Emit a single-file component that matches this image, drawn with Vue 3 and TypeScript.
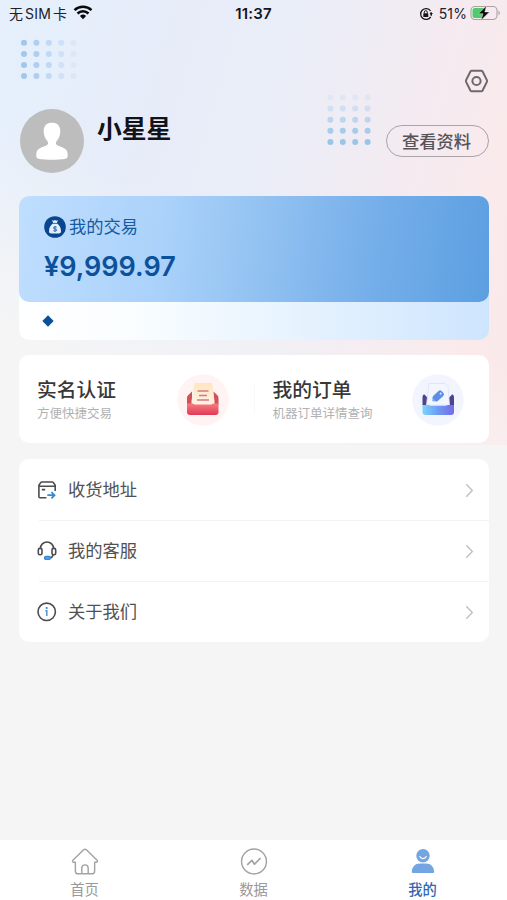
<script setup lang="ts">
interface Dot { x: number; y: number; o: number }
interface MenuItem { id: string; label: string }

const topDots: Dot[] = []
for (let r = 0; r < 4; r++) {
  for (let c = 0; c < 5; c++) {
    topDots.push({ x: 4 + c * 12.4, y: 3.8 + r * 11.1, o: [0.9, 0.72, 0.48, 0.28, 0.14][c] })
  }
}

const sideDots: Dot[] = []
for (let r = 0; r < 5; r++) {
  for (let c = 0; c < 4; c++) {
    sideDots.push({ x: 4.4 + c * 12.4, y: 4.5 + r * 11.1, o: [0.14, 0.32, 0.55, 0.8, 0.95][r] })
  }
}

const menu: MenuItem[] = [
  { id: 'address', label: '收货地址' },
  { id: 'service', label: '我的客服' },
  { id: 'about', label: '关于我们' },
]
</script>

<template>
  <main class="page">
    <div class="status">
      <div class="carrier">
        <span>无<i class="sim">SIM</i>卡</span>
        <svg width="20" height="15" viewBox="0 0 20 15">
          <path d="M10 14.2 6.9 11a4.5 4.5 0 0 1 6.2 0Z" fill="#08090c" />
          <path d="M4.5 8.5a8 8 0 0 1 11 0M1.5 5.2a12.4 12.4 0 0 1 17 0" fill="none" stroke="#08090c" stroke-width="2.5" />
        </svg>
      </div>
      <div class="clock">11:37</div>
      <div class="power">
        <svg width="14" height="14" viewBox="0 0 14 14">
          <path d="M11.5 3.9A5.4 5.4 0 1 0 11.7 9.8M12 5.1a5.4 5.4 0 0 1 0 3.7" fill="none" stroke="#181519" stroke-width="1.3" />
          <path d="m10.6 6 3.2.1-1.4 2.4z" fill="#181519" />
          <rect x="4.3" y="6.3" width="5" height="3.8" rx=".6" fill="#181519" />
          <path d="M5.3 6.5V5.2a1.5 1.5 0 0 1 3 0v1.3" fill="none" stroke="#181519" stroke-width="1" />
        </svg>
        <span>51%</span>
        <svg class="battery" width="31" height="16" viewBox="0 0 31 16">
          <rect x="1" y="1.5" width="26" height="13" rx="4" fill="none" stroke="#a9a2a5" stroke-width="1.1" />
          <path d="M28.5 5.7v4.6c1.7-.7 1.7-3.9 0-4.6Z" fill="#a9a2a5" />
          <path d="M5 3h9v10H5a2.5 2.5 0 0 1-2.5-2.5v-5A2.5 2.5 0 0 1 5 3Z" fill="#50cb6c" />
          <path d="M16.6 .8 8.4 8.8h4.6L10.8 15.4l8.7-8.5h-4.7Z" fill="#09090a" stroke="#f6edf2" stroke-width=".5" />
        </svg>
      </div>
    </div>

    <header class="profile">
      <svg class="dots-top" width="58" height="42" viewBox="0 0 58 42">
        <circle v-for="(d, i) in topDots" :key="i" :cx="d.x" :cy="d.y" r="3" fill="#9bc1e9" :opacity="d.o" />
      </svg>
      <svg class="dots-side" width="46" height="53" viewBox="0 0 46 53">
        <circle v-for="(d, i) in sideDots" :key="i" :cx="d.x" :cy="d.y" r="3" fill="#94c3e8" :opacity="d.o" />
      </svg>
      <div class="identity">
        <svg class="avatar" width="64" height="64" viewBox="0 0 64 64">
          <circle cx="32" cy="32" r="32" fill="#bdbdbd" />
          <path d="M32 13.5c-5.3 0-8.6 3.8-8.3 9.2.3 4.7 2 7.3 3.8 9.6 1 1.6.7 3.5-1.2 4.3l-5.6 2.2c-3 1.3-4.4 3.4-4.4 6.6v1.7c0 1.7 1 2.5 2.8 2.8 7.9 1.1 17.9 1.1 25.8 0 1.8-.3 2.8-1.1 2.8-2.8v-1.7c0-3.2-1.4-5.3-4.4-6.6l-5.6-2.2c-1.9-.8-2.2-2.7-1.2-4.3 1.8-2.3 3.5-4.9 3.8-9.6.3-5.4-3-9.2-8.3-9.2Z" fill="#fff" />
        </svg>
        <h1 class="name">小星星</h1>
      </div>
      <div class="actions">
        <svg class="gear" width="25" height="24" viewBox="0 0 25 24">
          <path d="M7.6 1.8h9.8q.8 0 1.2.7l4.3 8.6q.4.9 0 1.8l-4.3 8.6q-.4.7-1.2.7H7.6q-.8 0-1.2-.7l-4.3-8.6q-.4-.9 0-1.8l4.3-8.6q.4-.7 1.2-.7Z" fill="none" stroke="#6c696c" stroke-width="2" />
          <circle cx="12.5" cy="12" r="4.1" fill="none" stroke="#6c696c" stroke-width="2" />
        </svg>
        <button class="view">查看资料</button>
      </div>
    </header>

    <section class="wallet">
      <div class="balance">
        <div class="balance-title">
          <svg width="22" height="22" viewBox="0 0 22 22">
            <circle cx="11" cy="11" r="10.8" fill="#0a4590" />
            <path d="m8 4 1.5.7L11 3.9l1.5.8L14 4l-1.2 3.2c3.2 2 4.2 5.1 4.2 8.1 0 1.4-.8 2.2-2.2 2.2H7.2C5.8 17.5 5 16.7 5 15.3c0-3 1-6.1 4.2-8.1Z" fill="#e1effc" />
            <path d="M8.8 7.4h4.4M12.8 11.3c-.9-.8-3.4-.7-3.4.7 0 1.5 3.4.6 3.4 2 0 1.3-2.5 1.4-3.5.6M11 10v5.7" fill="none" stroke="#2460a6" stroke-width=".9" />
          </svg>
          <span>我的交易</span>
        </div>
        <div class="amount">¥9,999.97</div>
      </div>
      <div class="notice"><i class="diamond"></i></div>
    </section>

    <section class="features">
      <div class="feature">
        <div>
          <h2>实名认证</h2>
          <p>方便快捷交易</p>
        </div>
        <svg width="52" height="52" viewBox="0 0 52 52">
          <defs>
            <linearGradient id="redBox" x1="0" y1="0" x2="0" y2="1"><stop stop-color="#fa7c7d" /><stop offset="1" stop-color="#de3a58" /></linearGradient>
            <linearGradient id="paper" x1="0" y1="0" x2="0" y2="1"><stop stop-color="#fde6c0" /><stop offset="1" stop-color="#fff5ed" /></linearGradient>
          </defs>
          <circle cx="26" cy="26" r="25.7" fill="#fff3f3" />
          <path d="M10 31v-7q0-2 1.4-3l3.6-3.5V31M41.5 31v-7q0-2-1.4-3l-3.6-3.5V31" fill="#d1505a" />
          <path d="M17.5 9H35l2.5 18v6h-23v-6Z" fill="url(#paper)" />
          <path d="M20.5 17H31.5M22 21.5h8M20 26h12" stroke="#d9797d" stroke-width="1.5" />
          <path d="M10 29.5h5q2 0 2.5 1h17q.5-1 2.5-1h4.5v8.5q0 3-3 3H13q-3 0-3-3Z" fill="url(#redBox)" />
        </svg>
      </div>
      <div class="divider"></div>
      <div class="feature">
        <div>
          <h2>我的订单</h2>
          <p>机器订单详情查询</p>
        </div>
        <svg width="52" height="52" viewBox="0 0 52 52">
          <defs>
            <linearGradient id="blueBox" x1="0" y1="0" x2="1" y2="0"><stop stop-color="#7fd3fa" /><stop offset=".5" stop-color="#6b9cf3" /><stop offset="1" stop-color="#756ae4" /></linearGradient>
          </defs>
          <circle cx="26" cy="26" r="25.7" fill="#f2f5fe" />
          <path d="M10.5 31v-7q0-4 2-3.5l3.5 3.7V31M42 31v-7q0-4-2-3.5l-3.5 3.7V31" fill="#49458f" />
          <path d="M17 9.5h16l3 3L37.5 31h-23Z" fill="#f4f6ff" stroke="#dde1f7" stroke-width=".8" />
          <g transform="rotate(-42 26 22)">
            <rect x="20.5" y="18.7" width="11.5" height="6.8" rx="2" fill="#5d8ee8" />
            <path d="m20.8 19.5-2.5 2.6 2.5 2.6" fill="#7aa8f1" />
            <circle cx="29.6" cy="22" r="1" fill="#dfe8ff" />
          </g>
          <path d="M10.5 31h5.5q2 0 2.5.8h15.5q.5-.8 2.5-.8H42v7q0 3-3 3H13.5q-3 0-3-3Z" fill="url(#blueBox)" />
        </svg>
      </div>
    </section>

    <nav class="menu">
      <a v-for="item in menu" :key="item.id" class="row">
        <svg v-if="item.id === 'address'" class="icon" width="20" height="20" viewBox="0 0 20 20" fill="none" stroke="#4c4c4e" stroke-width="1.6">
          <path d="M9.4 17.8H2.9q-1 0-1-1V5.2L3.7 2.6q.4-.6 1.2-.6h10.3q.8 0 1.2.6l1.8 2.6v5.9M1.9 6.3h16.3M4.8 9.6h3.4" />
          <path d="M10.3 15.2h7M14.4 12.1l3.1 3.1-3.1 3.1" stroke="#3888ce" stroke-width="1.8" />
        </svg>
        <svg v-else-if="item.id === 'service'" class="icon" width="20" height="20" viewBox="0 0 20 20" fill="none" stroke="#4c4c4e" stroke-width="1.6">
          <path d="M3.4 8.1V7.6a6.5 6.5 0 0 1 13.2 0v.5M16 13.5q-.3 3-2.6 3.4" />
          <rect x="1.3" y="7.4" width="3.7" height="6.4" rx="1.6" />
          <rect x="15" y="7.4" width="3.7" height="6.4" rx="1.6" />
          <rect x="7.5" y="15.5" width="6" height="2.9" rx="1.45" fill="#65a4dc" stroke="#3888ce" stroke-width="1.3" />
        </svg>
        <svg v-else class="icon" width="20" height="20" viewBox="0 0 20 20">
          <circle cx="9.7" cy="9.8" r="8.7" fill="none" stroke="#4c4c4e" stroke-width="1.6" />
          <circle cx="9.7" cy="6" r="1.1" fill="#3888ce" />
          <path d="M8.3 8.8h1.5v5.2" fill="none" stroke="#4f94d3" stroke-width="1.5" />
        </svg>
        <span class="row-label">{{ item.label }}</span>
        <svg class="arrow" width="9" height="15" viewBox="0 0 9 15"><path d="m1.3 1.2 6 6.3-6 6.3" fill="none" stroke="#c0c0c0" stroke-width="1.4" /></svg>
      </a>
    </nav>

    <footer class="tabs">
      <a class="tab">
        <svg width="28" height="28" viewBox="0 0 28 28" fill="none" stroke="#a3a3a3" stroke-width="1.5" stroke-linejoin="round">
          <path d="M12.6 1.8 1.4 12.8q-1 1.4.8 2H4v9q0 3 3 3h14q3 0 3-3v-9h1.8q1.8-.6.8-2L15.4 1.8q-1.4-1.2-2.8 0Z" />
          <path d="M10.7 26.5v-5.7a3.3 3.3 0 0 1 6.6 0v5.7" />
        </svg>
        <span>首页</span>
      </a>
      <a class="tab">
        <svg width="28" height="28" viewBox="0 0 28 28" fill="none" stroke="#a3a3a3" stroke-width="1.5" stroke-linecap="round" stroke-linejoin="round">
          <circle cx="14" cy="14" r="12.9" />
          <path d="m7.5 17 4.3-4.2 2.7 4 5.8-5.9" stroke-width="1.8" />
        </svg>
        <span>数据</span>
      </a>
      <a class="tab active">
        <svg width="28" height="28" viewBox="0 0 28 28">
          <circle cx="14" cy="8" r="7" fill="#73a5e3" />
          <path d="M2.4 24.8c0-5 3.8-8.6 8.2-8.6h6.8c4.4 0 8.2 3.6 8.2 8.6q0 1.2-1.2 1.2H3.6q-1.2 0-1.2-1.2Z" fill="#73a5e3" />
          <path d="M10.7 8.9c1.2 2.8 5.4 2.8 6.6 0" fill="none" stroke="#fff" stroke-width="1.2" stroke-linecap="round" />
        </svg>
        <span>我的</span>
      </a>
    </footer>
  </main>
</template>

<style>
body { background: #f5f5f5; }
</style>

<style scoped>
* { box-sizing: border-box; }
.page {
  width: 507px;
  height: 900px;
  display: flex;
  flex-direction: column;
  font-family: Inter, "Noto Sans CJK SC", sans-serif;
  color: #444;
  background:
    linear-gradient(207deg, rgba(245, 245, 245, 0) 52%, #f5f5f5 83%) 0 0 / 507px 445px no-repeat,
    linear-gradient(106deg, #e5f0fd 0, #e7ecf8 30%, #e9eef9 46%, #f2ebf2 67%, #faeaec 86%, #fbe9e9 100%) 0 0 / 507px 445px no-repeat,
    #f5f5f5;
}
h1, h2, p { margin: 0; }
.status {
  height: 27px;
  flex: none;
  display: grid;
  grid-template-columns: 1fr auto 1fr;
  align-items: center;
  padding: 0 6px 0 9px;
  font-size: 14px;
  line-height: 20px;
  color: #202127;
}
.carrier { display: flex; align-items: center; gap: 6px; }
.carrier span { white-space: nowrap; }
.carrier svg { margin-top: -2px; }
.sim { font-style: normal; margin: 0 2px; letter-spacing: .2px; }
.clock { margin-right: 3px; font-weight: 600; font-size: 15px; color: #15161c; letter-spacing: .15px; }
.power { display: flex; align-items: center; justify-content: flex-end; }
.power span { margin: 0 3px 0 6px; letter-spacing: .1px; }
.battery { margin-top: -1px; }
.profile {
  position: relative;
  height: 169px;
  flex: none;
  display: flex;
  justify-content: space-between;
  padding: 0 18px 0 20px;
}
.dots-top { position: absolute; left: 20px; top: 12px; }
.dots-side { position: absolute; left: 326px; top: 66px; }
.identity { display: flex; gap: 13px; padding-top: 82px; }
.name { margin-top: 2px; font-size: 24.8px; line-height: 36px; font-weight: 700; color: #111319; }
.actions { display: flex; flex-direction: column; align-items: flex-end; padding-top: 42px; }
.gear { margin: 0 0 32px; }
.view {
  width: 103px;
  height: 32px;
  padding: 0 2px 0 0;
  border: 1px solid #aaa3a8;
  border-radius: 16px;
  background: transparent;
  font: 500 17.3px/28px "Noto Sans CJK SC", sans-serif;
  color: #575357;
}
.wallet {
  width: 470px;
  height: 144px;
  flex: none;
  margin-left: 19px;
  border-radius: 10px;
  background: linear-gradient(90deg, #fff 0, #f9fdff 25%, #e3f1fe 65%, #cee5fe 100%);
}
.balance {
  height: 106px;
  padding: 19px 25px 0;
  border-radius: 10px;
  background: linear-gradient(97deg, #bfdeff 0, #abd2fa 30%, #94c3f2 50%, #76afea 74%, #5c9fe1 100%);
  color: #0b519c;
}
.balance-title { display: flex; align-items: center; gap: 3px; height: 24px; font-size: 17.3px; line-height: 24px; color: #165a9f; }
.amount { margin-top: 10px; font-size: 27px; line-height: 36px; font-weight: 600; }
.notice { height: 38px; display: flex; align-items: center; padding-left: 25px; }
.diamond { width: 8px; height: 8px; transform: rotate(45deg); background: #0d5098; }
.features {
  width: 470px;
  height: 88px;
  flex: none;
  display: flex;
  align-items: center;
  margin: 15px 0 16px 19px;
  border-radius: 10px;
  background: #fff;
}
.feature { flex: 1; display: flex; align-items: center; justify-content: space-between; padding: 1px 25px 0 18px; }
.feature h2 { font-size: 19.8px; line-height: 28px; font-weight: 500; color: #383838; }
.feature p { margin-top: 1px; font-size: 12.5px; line-height: 18px; color: #b1b1b1; }
.divider { width: 1px; height: 30px; background: #f8f8f8; }
.menu { width: 470px; height: 183px; flex: none; margin-left: 19px; border-radius: 10px; background: #fff; }
.row { height: 61px; display: flex; align-items: center; padding: 1px 15px 0 18px; position: relative; }
.row:not(:last-child)::after { content: ""; position: absolute; right: 0; bottom: -1px; left: 20px; height: 1px; background: #f3f3f3; }
.row-label { flex: 1; margin-left: 11px; font-size: 17.3px; line-height: 26px; color: #515151; }
.tabs { height: 60px; flex: none; display: flex; margin-top: auto; background: #fff; }
.tab { flex: 1; display: flex; flex-direction: column; align-items: center; padding-top: 8px; font-size: 14.3px; line-height: 20px; color: #999; }
.tab span { margin-top: 5px; }
.tab.active { color: #3266b4; font-weight: 500; }
</style>
